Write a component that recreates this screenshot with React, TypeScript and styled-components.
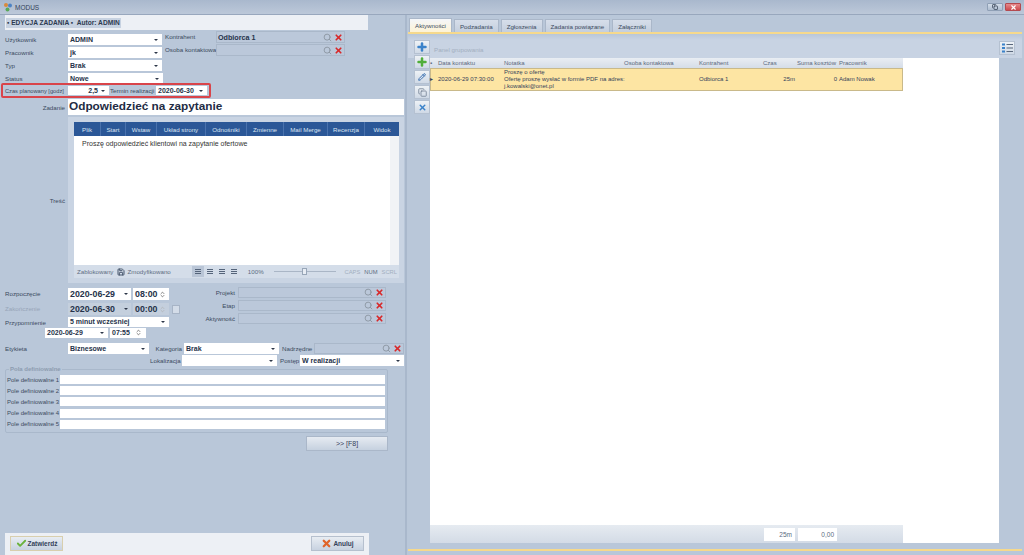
import React from 'react'
import styled, { createGlobalStyle } from 'styled-components'
import { Search, X, Check, Plus, Pencil, Copy, Save, ChevronsUpDown } from 'lucide-react'

const GlobalStyle = createGlobalStyle`
  html, body {
    margin: 0;
    height: 555px;
    overflow: hidden;
    background: #b9c7d9;
    font-family: 'Liberation Sans', Arial, sans-serif;
    font-size: 6.2px;
    color: #3b4a60;
  }
`

const RIBBON = ['Plik', 'Start', 'Wstaw', 'Układ strony', 'Odnośniki', 'Zmienne', 'Mail Merge', 'Recenzja', 'Widok']
const RIBBON_W = [27, 25, 31, 49, 41, 37, 44, 37, 34]
const TABS = ['Aktywności', 'Podzadania', 'Zgłoszenia', 'Zadania powiązane', 'Załączniki']
const COLS = '8px 66px 120px 75px 64px 34px 42px 64px'

function Combo({ value, width, align, short }: { value?: string; width: number; align?: string; short?: boolean }) {
  return (
    <Field $w={width} $align={align} $short={short}>
      <span>{value}</span>
      <Caret />
    </Field>
  )
}

function Picker({ value, width, tall }: { value?: string; width: number; tall?: boolean }) {
  return (
    <PickBox $w={width} $tall={tall}>
      <b>{value}</b>
      <Search size={9} color="#8d97a3" strokeWidth={2.5} />
      <X size={9} color="#d8282a" strokeWidth={4.5} />
    </PickBox>
  )
}

export default function App() {
  return (
    <>
      <GlobalStyle />
      <TitleBar>
        <Logo viewBox="0 0 10 10">
          <circle cx="3" cy="3" r="2" fill="#d98a3c" />
          <circle cx="7" cy="3.5" r="2" fill="#4c82c4" />
          <circle cx="4.5" cy="7.5" r="2" fill="#5aa85a" />
        </Logo>
        <span>MODUS</span>
        <WinButtons>
          <WinButton><Copy size={6} color="#38465a" strokeWidth={3} /></WinButton>
          <WinButton $close><X size={7} color="#fff" strokeWidth={4} /></WinButton>
        </WinButtons>
      </TitleBar>
      <Main>
        <LeftPanel>
          <HeaderStrip>
            <HeaderChip>▪ EDYCJA ZADANIA ▪ &nbsp;Autor: ADMIN</HeaderChip>
          </HeaderStrip>

          <TopForm>
            <div>
              <Row><Label>Użytkownik</Label><Combo value="ADMIN" width={94} /></Row>
              <Row><Label>Pracownik</Label><Combo value="jk" width={94} /></Row>
              <Row><Label>Typ</Label><Combo value="Brak" width={94} /></Row>
              <Row><Label>Status</Label><Combo value="Nowe" width={95} /></Row>
            </div>
            <PartyColumn>
              <Row><PartyLabel>Kontrahent</PartyLabel><Picker value="Odbiorca 1" width={129} tall /></Row>
              <Row><PartyLabel>Osoba kontaktowa</PartyLabel><Picker width={129} tall /></Row>
            </PartyColumn>
          </TopForm>

          <Highlight>
            <HighlightLabel>Czas planowany [godz]</HighlightLabel>
            <Combo value="2,5" width={41} align="right" short />
            <InlineLabel>Termin realizacji</InlineLabel>
            <Combo value="2020-06-30" width={51} short />
          </Highlight>

          <TaskRow>
            <RightLabel>Zadanie</RightLabel>
            <TaskTitle>Odpowiedzieć na zapytanie</TaskTitle>
          </TaskRow>

          <EditorRow>
            <RightLabel>Treść</RightLabel>
            <EditorPanel>
              <Ribbon>
                {RIBBON.map((name, i) => (
                  <RibbonTab key={name} style={{ width: RIBBON_W[i] }}>{name}</RibbonTab>
                ))}
              </Ribbon>
              <EditorBody>
                Proszę odpowiedzieć klientowi na zapytanie ofertowe
                <EditorScroll />
              </EditorBody>
              <EditorStatus>
                <span>Zablokowany</span>
                <StatusIcon><Save size={8} color="#47566c" strokeWidth={3} /></StatusIcon>
                <span>Zmodyfikowano</span>
                <AlignGroup>
                  <AlignIcon $active /><AlignIcon /><AlignIcon /><AlignIcon />
                </AlignGroup>
                <span>100%</span>
                <Slider><SliderThumb /></Slider>
                <Indicators>
                  <Dim>CAPS</Dim><span>NUM</span><Dim>SCRL</Dim>
                </Indicators>
              </EditorStatus>
            </EditorPanel>
          </EditorRow>

          <ScheduleBlock>
            <ScheduleLeft>
              <DateRow>
                <Label>Rozpoczęcie</Label>
                <DateField $w={63}>2020-06-29<Caret /></DateField>
                <DateField $w={36}>08:00<ChevronsUpDown size={7} color="#333" /></DateField>
              </DateRow>
              <DateRow $tall>
                <Label $muted>Zakończenie</Label>
                <DateField $w={63} $off>2020-06-30<Caret /></DateField>
                <DateField $w={36} $off>00:00<ChevronsUpDown size={7} color="#aaa" /></DateField>
                <Tick />
              </DateRow>
              <ReminderMain><Label>Przypomnienie</Label><Combo value="5 minut wcześniej" width={101} short /></ReminderMain>
              <ReminderRow>
                <Combo value="2020-06-29" width={63} short />
                <TimeCombo $short>07:55<ChevronsUpDown size={7} color="#333" /></TimeCombo>
              </ReminderRow>
            </ScheduleLeft>
            <LinksColumn>
              <LinkRow><LinkLabel>Projekt</LinkLabel><Picker width={148} /></LinkRow>
              <LinkRow><LinkLabel>Etap</LinkLabel><Picker width={148} /></LinkRow>
              <LinkRow><LinkLabel>Aktywność</LinkLabel><Picker width={148} /></LinkRow>
            </LinksColumn>
          </ScheduleBlock>

          <MetaRow>
            <Label>Etykieta</Label>
            <Combo value="Biznesowe" width={81} />
            <MetaLabel $w={30}>Kategoria</MetaLabel>
            <Combo value="Brak" width={95} />
            <MetaLabel $w={30}>Nadrzędne</MetaLabel>
            <Picker width={90} />
          </MetaRow>
          <MetaRow $second>
            <MetaLabel $w={30}>Lokalizacja</MetaLabel>
            <Combo width={95} />
            <MetaLabel $w={18}>Postęp</MetaLabel>
            <Combo value="W realizacji" width={104} />
          </MetaRow>

          <FieldGroup>
            <GroupTitle>Pola definiowalne</GroupTitle>
            {[1, 2, 3, 4, 5].map((n) => (
              <CustomRow key={n}>
                <span>Pole definiowalne {n}</span>
                <CustomInput />
              </CustomRow>
            ))}
          </FieldGroup>

          <NextRow>
            <NextButton>&gt;&gt; [F8]</NextButton>
          </NextRow>

          <Spacer />

          <ActionBar>
            <ActionButton $confirm><Check size={11} color="#6ab23c" strokeWidth={4} />Zatwierdź</ActionButton>
            <ActionButton><X size={11} color="#e0642a" strokeWidth={5} />Anuluj</ActionButton>
          </ActionBar>
        </LeftPanel>

        <RightPanel>
          <Tabs>
            {TABS.map((tab, i) => (
              <Tab key={tab} $active={i === 0}>{tab}</Tab>
            ))}
          </Tabs>
          <TabBody>
            <SideTools>
              <ToolButton><Plus size={12} color="#3b82c9" strokeWidth={5} /></ToolButton>
              <ToolButton><Plus size={12} color="#4fae3a" strokeWidth={5} /></ToolButton>
              <ToolButton><Pencil size={8} color="#3b6fb0" strokeWidth={3} /></ToolButton>
              <ToolButton><Copy size={9} color="#6b7a8e" strokeWidth={2} /></ToolButton>
              <ToolButton><X size={9} color="#3b82c9" strokeWidth={4} /></ToolButton>
            </SideTools>
            <GridArea>
              <GroupPanel>Panel grupowania</GroupPanel>
              <GridBody>
                <GridHead>
                  <span>▪</span>
                  <span>Data kontaktu</span>
                  <span>Notatka</span>
                  <span>Osoba kontaktowa</span>
                  <span>Kontrahent</span>
                  <span>Czas</span>
                  <span>Suma kosztów</span>
                  <span>Pracownik</span>
                </GridHead>
                <GridRow>
                  <span>▸</span>
                  <span>2020-06-29 07:30:00</span>
                  <span>
                    Proszę o ofertę<br />
                    Ofertę proszę wysłać w formie PDF na adres:<br />
                    j.kowalski@onet.pl
                  </span>
                  <span />
                  <span>Odbiorca 1</span>
                  <NumCell>25m</NumCell>
                  <NumCell>0</NumCell>
                  <span>Adam Nowak</span>
                </GridRow>
                <GridFill />
                <GridFoot>
                  <FootBox $w={31}>25m</FootBox>
                  <FootBox $w={39}>0,00</FootBox>
                </GridFoot>
              </GridBody>
            </GridArea>
            <RightTools>
              <ToolButton><ListIcon /></ToolButton>
            </RightTools>
          </TabBody>
          <BottomLine />
        </RightPanel>
      </Main>
    </>
  )
}

function ListIcon() {
  return (
    <svg width="11" height="10" viewBox="0 0 11 10">
      <rect x="0" y="0.5" width="3" height="2" fill="#3b82c9" />
      <rect x="0" y="4" width="3" height="2" fill="#3b82c9" />
      <rect x="0" y="7.5" width="3" height="2" fill="#3b82c9" />
      <path d="M4.5 1.5H11M4.5 5H11M4.5 8.5H11" stroke="#59677b" />
    </svg>
  )
}

const Caret = styled.i`
  flex: none;
  margin-left: auto;
  width: 0;
  height: 0;
  border-left: 2px solid transparent;
  border-right: 2px solid transparent;
  border-top: 2.5px solid #2c3648;
`

const TitleBar = styled.header`
  height: 14px;
  display: flex;
  align-items: center;
  gap: 2px;
  padding: 0 3px;
  background: linear-gradient(#a9b8cd, #bcc8d9);
  border-bottom: 1px solid #98a7bd;
  font-size: 6.5px;
  color: #34425a;
`

const Logo = styled.svg`
  width: 10px;
  height: 10px;
`

const WinButtons = styled.div`
  margin-left: auto;
  display: flex;
  gap: 2px;
`

const WinButton = styled.div<{ $close?: boolean }>`
  width: 16px;
  height: 8px;
  display: flex;
  align-items: center;
  justify-content: center;
  border: 1px solid ${(p) => (p.$close ? '#b34a50' : '#8fa0b6')};
  box-sizing: border-box;
  border-radius: 1px;
  background: ${(p) => (p.$close ? 'linear-gradient(#e68a8c, #cc4a4e)' : 'linear-gradient(#d3dde9, #aebdd0)')};
`

const Main = styled.main`
  display: flex;
  height: 540px;
`

const LeftPanel = styled.section`
  width: 407px;
  flex: none;
  display: flex;
  flex-direction: column;
  box-sizing: border-box;
  border-right: 2px solid #a9b8cc;
`

const HeaderStrip = styled.div`
  margin: 0 37px 0 5px;
  height: 15px;
  flex: none;
  display: flex;
  align-items: center;
  background: #edf0f5;
  padding-left: 1px;
`

const HeaderChip = styled.div`
  background: #c7d2e1;
  font-weight: 700;
  font-size: 6.6px;
  line-height: 10px;
  padding: 0 1px;
  color: #2c3a50;
`

const TopForm = styled.div`
  display: flex;
  padding-top: 4px;
`

const Row = styled.div`
  height: 13px;
  display: flex;
  align-items: flex-start;
`

const Label = styled.label<{ $muted?: boolean }>`
  width: 63px;
  margin-left: 5px;
  flex: none;
  line-height: 11px;
  color: ${(p) => (p.$muted ? '#97a5b8' : '#3b4a60')};
`

const Field = styled.div<{ $w: number; $align?: string; $short?: boolean }>`
  width: ${(p) => p.$w}px;
  height: ${(p) => (p.$short ? 9.5 : 11)}px;
  flex: none;
  box-sizing: border-box;
  background: #fff;
  display: flex;
  align-items: center;
  padding: 0 4px 0 2px;
  font-weight: 700;
  font-size: 7px;
  color: #26334a;
  white-space: nowrap;
  & > span {
    flex: ${(p) => (p.$align === 'right' ? 1 : 'none')};
    text-align: ${(p) => p.$align ?? 'left'};
    margin-right: ${(p) => (p.$align === 'right' ? '3px' : 0)};
  }
  & > i {
    margin-left: ${(p) => (p.$align === 'right' ? 0 : 'auto')};
  }
`

const TimeCombo = styled(Field).attrs({ $w: 36 })`
  & > svg {
    margin-left: auto;
  }
`

const PartyColumn = styled.div`
  margin-left: 2px;
  margin-top: -3px;
`

const PartyLabel = styled.span`
  width: 51px;
  flex: none;
  line-height: 12px;
  white-space: nowrap;
`

const PickBox = styled.div<{ $w: number; $tall?: boolean }>`
  width: ${(p) => p.$w}px;
  height: ${(p) => (p.$tall ? 12 : 11)}px;
  flex: none;
  box-sizing: border-box;
  display: flex;
  align-items: center;
  gap: 2px;
  padding: 0 1px 0 1px;
  background: #bbc8da;
  border: 1px solid #aab8ca;
  font-size: 7.2px;
  color: #26334a;
  & > b {
    flex: 1;
  }
`

const Highlight = styled.div`
  display: flex;
  align-items: center;
  width: 210px;
  height: 15px;
  box-sizing: border-box;
  margin-left: 1px;
  margin-top: -3px;
  border: 2px solid #d9444a;
  border-radius: 2px;
`

const HighlightLabel = styled.span`
  width: 65px;
  padding-left: 2px;
  box-sizing: border-box;
  flex: none;
  font-size: 5.7px;
  white-space: nowrap;
`

const InlineLabel = styled.span`
  width: 46px;
  flex: none;
  padding-left: 1px;
  white-space: nowrap;
`

const TaskRow = styled.div`
  display: flex;
  margin-top: 1px;
  height: 16px;
`

const RightLabel = styled.span`
  width: 65px;
  flex: none;
  text-align: right;
  align-self: center;
`

const TaskTitle = styled.div`
  margin-left: 3px;
  width: 336px;
  background: #fff;
  font-weight: 700;
  font-size: 11.8px;
  line-height: 15px;
  padding-left: 1px;
  box-sizing: border-box;
  color: #1f2c44;
  white-space: nowrap;
`

const EditorRow = styled.div`
  display: flex;
  margin-top: 2px;
  height: 166px;
`

const EditorPanel = styled.div`
  margin-left: 3px;
  width: 336px;
  box-sizing: border-box;
  padding: 5px 5px 5px 6px;
  background: #c9d4e3;
  display: flex;
  flex-direction: column;
`

const Ribbon = styled.div`
  height: 14px;
  flex: none;
  display: flex;
  justify-content: flex-end;
  background: #2b5797;
`

const RibbonTab = styled.div`
  display: flex;
  align-items: center;
  justify-content: center;
  flex: none;
  color: #dbe5f2;
  border-right: 1px solid #4a72ad;
  box-sizing: border-box;
  white-space: nowrap;
  &:last-child {
    border-right: none;
  }
`

const EditorBody = styled.div`
  position: relative;
  flex: 1;
  background: #fff;
  padding: 3px 8px;
  font-size: 7px;
  line-height: 10px;
  color: #333;
`

const EditorScroll = styled.div`
  position: absolute;
  top: 0;
  right: 0;
  bottom: 0;
  width: 9px;
  background: #f1f3f6;
`

const EditorStatus = styled.div`
  height: 13px;
  flex: none;
  display: flex;
  align-items: center;
  padding: 0 2px 0 3px;
  background: #d4dde9;
  color: #5e6d82;
  white-space: nowrap;
`

const StatusIcon = styled.span`
  display: flex;
  margin: 0 2px 0 4px;
`

const AlignGroup = styled.div`
  margin-left: 21px;
  margin-right: 8px;
  display: flex;
`

const AlignIcon = styled.div<{ $active?: boolean }>`
  width: 12px;
  height: 11px;
  display: flex;
  align-items: center;
  justify-content: center;
  background: ${(p) => (p.$active ? '#b9c5d6' : 'transparent')};
  &::after {
    content: '';
    width: 6px;
    height: 5px;
    background: repeating-linear-gradient(#55647a 0 1px, transparent 1px 2px);
  }
`

const Slider = styled.div`
  position: relative;
  width: 62px;
  height: 1px;
  margin: 0 4px 0 10px;
  background: #aab6c6;
`

const SliderThumb = styled.div`
  position: absolute;
  left: 28px;
  top: -3px;
  width: 5px;
  height: 7px;
  background: #e8edf4;
  border: 1px solid #98a6b8;
  box-sizing: border-box;
`

const Indicators = styled.div`
  margin-left: auto;
  display: flex;
  gap: 4px;
  font-size: 5.8px;
`

const Dim = styled.span`
  color: #a3afbf;
`

const ScheduleBlock = styled.div`
  display: flex;
  margin-top: 5px;
`

const ScheduleLeft = styled.div`
  width: 180px;
  flex: none;
`

const DateRow = styled.div<{ $tall?: boolean }>`
  height: ${(p) => (p.$tall ? 14 : 15)}px;
  display: flex;
  align-items: flex-start;
  gap: 2px;
  & > label {
    margin-right: -2px;
    line-height: 12px;
  }
`

const DateField = styled.div<{ $w: number; $off?: boolean }>`
  width: ${(p) => p.$w}px;
  height: 12px;
  flex: none;
  box-sizing: border-box;
  padding: 0 3px 0 2px;
  display: flex;
  align-items: center;
  background: ${(p) => (p.$off ? '#c4cfdd' : '#fff')};
  font-weight: 700;
  font-size: 8.8px;
  color: #26334a;
  white-space: nowrap;
  overflow: hidden;
  & > svg {
    margin-left: auto;
    flex: none;
  }
`

const Tick = styled.div`
  width: 7px;
  height: 7px;
  margin: 2px 0 0 1px;
  background: #d3dce8;
  border: 1px solid #a7b4c6;
`

const ReminderMain = styled.div`
  height: 11px;
  display: flex;
  align-items: flex-start;
`

const ReminderRow = styled.div`
  height: 11px;
  display: flex;
  gap: 2px;
  padding-left: 45px;
`

const LinksColumn = styled.div`
  margin-top: -1px;
`

const LinkRow = styled.div`
  height: 13px;
  display: flex;
  align-items: flex-start;
  gap: 3px;
`

const LinkLabel = styled.span`
  width: 55px;
  flex: none;
  text-align: right;
  line-height: 11px;
`

const MetaRow = styled.div<{ $second?: boolean }>`
  display: flex;
  align-items: flex-start;
  height: 12px;
  margin-top: ${(p) => (p.$second ? 0 : 4)}px;
  padding-left: ${(p) => (p.$second ? 149 : 0)}px;
  gap: 2px;
  & > label {
    margin-right: -2px;
  }
`

const MetaLabel = styled.span<{ $w: number }>`
  width: ${(p) => p.$w}px;
  margin-left: 1px;
  flex: none;
  text-align: right;
  line-height: 11px;
  white-space: nowrap;
`

const FieldGroup = styled.fieldset`
  position: relative;
  margin: 2px 0 0 5px;
  width: 383px;
  height: 64px;
  flex: none;
  box-sizing: border-box;
  padding: 5px 2px 0 1px;
  border: 1px solid #a9b8cb;
  border-radius: 2px;
  display: flex;
  flex-direction: column;
  gap: 2.2px;
`

const GroupTitle = styled.div`
  position: absolute;
  left: 3px;
  top: -4px;
  padding: 0 1px;
  background: #b9c7d9;
  font-weight: 700;
  font-size: 6px;
  color: #8d9cb0;
`

const CustomRow = styled.div`
  height: 9px;
  flex: none;
  display: flex;
  align-items: center;
  font-size: 6px;
  white-space: nowrap;
  & > span {
    width: 53px;
    flex: none;
  }
`

const CustomInput = styled.div`
  flex: 1;
  height: 9px;
  background: #fff;
`

const NextRow = styled.div`
  display: flex;
  justify-content: flex-end;
  width: 388px;
  margin-top: 3px;
`

const NextButton = styled.button`
  width: 82px;
  height: 15px;
  padding: 0;
  font: inherit;
  font-size: 7px;
  color: #34425a;
  border: 1px solid #aab7c9;
  background: linear-gradient(#e6ebf2, #c6d1df);
`

const Spacer = styled.div`
  flex: 1;
`

const ActionBar = styled.footer`
  margin: 0 36px 0 5px;
  height: 22px;
  flex: none;
  display: flex;
  justify-content: space-between;
  align-items: flex-start;
  padding: 3px 5px 0;
  box-sizing: border-box;
  background: #edf0f5;
`

const ActionButton = styled.button<{ $confirm?: boolean }>`
  width: 53px;
  height: 15px;
  padding: 0;
  display: flex;
  align-items: center;
  justify-content: center;
  gap: 1px;
  font: inherit;
  font-size: 6.5px;
  font-weight: 700;
  color: #34425a;
  border: 1px solid ${(p) => (p.$confirm ? '#d8cfae' : '#b6c0ce')};
  background: linear-gradient(#e8edf3, #c8d2e0);
`

const RightPanel = styled.section`
  flex: 1;
  display: flex;
  flex-direction: column;
  padding: 3px 2px 4px 1px;
  min-width: 0;
`

const Tabs = styled.nav`
  display: flex;
  height: 14px;
  flex: none;
  gap: 2px;
  padding-left: 1px;
  align-items: flex-end;
`

const Tab = styled.div<{ $active?: boolean }>`
  height: ${(p) => (p.$active ? 14 : 13)}px;
  padding: 0 5px;
  display: flex;
  align-items: center;
  white-space: nowrap;
  color: #3b4a60;
  border: 1px solid #aab7c9;
  border-bottom: none;
  box-sizing: border-box;
  background: ${(p) => (p.$active ? 'linear-gradient(#f4f6fa, #fdf3d6)' : 'linear-gradient(#d6deea, #c4cfde)')};
`

const TabBody = styled.div`
  flex: 1;
  display: flex;
  min-height: 0;
  border-top: 2px solid #f6d98c;
  padding: 6px 7px 6px 6px;
  background: linear-gradient(#b9c7d9 0, #c8d3e3 6px, #c8d3e3 24px, #b9c7d9 24px);
`

const SideTools = styled.div`
  width: 16px;
  flex: none;
  display: flex;
  flex-direction: column;
  gap: 1px;
`

const ToolButton = styled.button`
  width: 16px;
  height: 14px;
  padding: 0;
  flex: none;
  display: flex;
  align-items: center;
  justify-content: center;
  border: 1px solid #b5c1d1;
  background: linear-gradient(#eef2f6, #cfd9e6);
`

const GridArea = styled.div`
  width: 569px;
  flex: none;
  display: flex;
  flex-direction: column;
`

const GroupPanel = styled.div`
  height: 18px;
  flex: none;
  display: flex;
  align-items: center;
  padding-left: 4px;
  color: #a3afc0;
`

const GridBody = styled.div`
  flex: 1;
  display: flex;
  flex-direction: column;
  background: #fff;
`

const GridHead = styled.div`
  display: grid;
  grid-template-columns: ${COLS};
  height: 10px;
  align-items: center;
  width: 473px;
  flex: none;
  background: linear-gradient(#e9edf3, #d5dde8);
  font-size: 6px;
  color: #5b6a80;
  white-space: nowrap;
`

const GridRow = styled.div`
  display: grid;
  grid-template-columns: ${COLS};
  height: 23px;
  align-items: center;
  width: 473px;
  flex: none;
  box-sizing: border-box;
  background: #fde5a3;
  box-shadow: inset 0 0 0 1px #c9b98a;
  font-size: 6px;
  line-height: 7px;
  color: #34425a;
  white-space: nowrap;
`

const NumCell = styled.span`
  text-align: right;
  padding-right: 2px;
`

const GridFill = styled.div`
  flex: 1;
`

const GridFoot = styled.div`
  width: 473px;
  height: 18px;
  flex: none;
  display: flex;
  align-items: center;
  justify-content: flex-end;
  gap: 3px;
  padding-right: 66px;
  box-sizing: border-box;
  background: linear-gradient(#e6ebf1, #d3dbe6);
`

const FootBox = styled.div<{ $w: number }>`
  width: ${(p) => p.$w}px;
  height: 13px;
  box-sizing: border-box;
  padding-right: 3px;
  display: flex;
  align-items: center;
  justify-content: flex-end;
  background: #fff;
  font-size: 6.5px;
  color: #5b6a80;
`

const RightTools = styled.div`
  margin-top: 1px;
`

const BottomLine = styled.div`
  height: 2px;
  flex: none;
  background: #f6d98c;
`
